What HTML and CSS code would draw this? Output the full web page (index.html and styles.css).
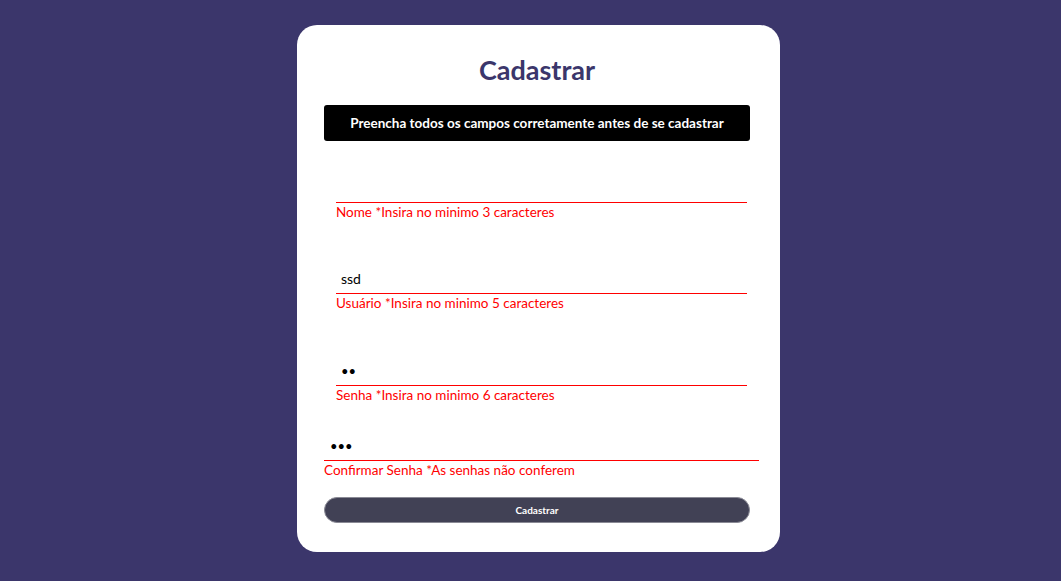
FILE: index.html
```html
<!DOCTYPE html>
<html lang="pt-BR">
<head>
<meta charset="utf-8">
<title>Cadastrar</title>
<link rel="stylesheet" href="styles.css">
</head>
<body>
<main class="page">
  <form class="card">
    <h1 class="title">Cadastrar</h1>
    <div class="notice">Preencha todos os campos corretamente antes de se cadastrar</div>

    <div class="field field-first">
      <input class="input" type="text" value="">
      <label class="error">Nome *Insira no minimo 3 caracteres</label>
    </div>

    <div class="field field-gap">
      <input class="input" type="text" value="ssd">
      <label class="error">Usuário *Insira no minimo 5 caracteres</label>
    </div>

    <div class="field field-gap3">
      <input class="input" type="password" value="12">
      <label class="error">Senha *Insira no minimo 6 caracteres</label>
    </div>

    <div class="field field-wide">
      <input class="input input-wide" type="password" value="123">
      <label class="error error-wide">Confirmar Senha *As senhas não conferem</label>
    </div>

    <button class="submit" type="button">Cadastrar</button>
  </form>
</main>
</body>
</html>
```

FILE: styles.css
```css
* { box-sizing: border-box; }

html, body {
  margin: 0;
  padding: 0;
  height: 100%;
}

body {
  background: #3b366b;
  font-family: Lato, "Open Sans", sans-serif;
}

.page {
  display: flex;
  padding-top: 25px;
  padding-left: 297px;
}

.card {
  width: 483px;
  height: 527px;
  background: #ffffff;
  border-radius: 20px;
  padding: 28px 30px 0 27px;
  display: flex;
  flex-direction: column;
}

.title {
  margin: 0;
  font-size: 27px;
  line-height: 34px;
  font-weight: 700;
  color: #3b366b;
  text-align: center;
}

.notice {
  margin-top: 18px;
  height: 36px;
  background: #000000;
  border-radius: 3px;
  color: #ffffff;
  font-weight: 700;
  font-size: 13.5px;
  display: flex;
  align-items: center;
  justify-content: center;
}

.field {
  display: flex;
  flex-direction: column;
  padding-left: 12px;
  padding-right: 3px;
}

.field-first { margin-top: 32px; }
.field-gap { margin-top: 43px; }
.field-gap3 { margin-top: 44px; }
.field-wide {
  margin-top: 27px;
  padding-left: 0;
  margin-right: -9px;
  padding-right: 0;
}

.input {
  height: 30px;
  border: 0;
  border-bottom: 1px solid #ff0000;
  outline: none;
  padding: 0 5px;
  font-family: Lato, "Open Sans", sans-serif;
  font-size: 14px;
  color: #000000;
  background: transparent;
}

.input[type="password"] {
  font-size: 13px;
}

.input-wide { padding: 0 6px; }

.error {
  color: #ff0000;
  font-size: 13.5px;
  line-height: 18px;
}

.submit {
  margin-top: 18px;
  height: 26px;
  border-radius: 13px;
  background: #414155;
  border: 1px solid #8a8a95;
  color: #ffffff;
  font-family: Lato, "Open Sans", sans-serif;
  font-weight: 700;
  font-size: 10px;
  cursor: pointer;
}
```
